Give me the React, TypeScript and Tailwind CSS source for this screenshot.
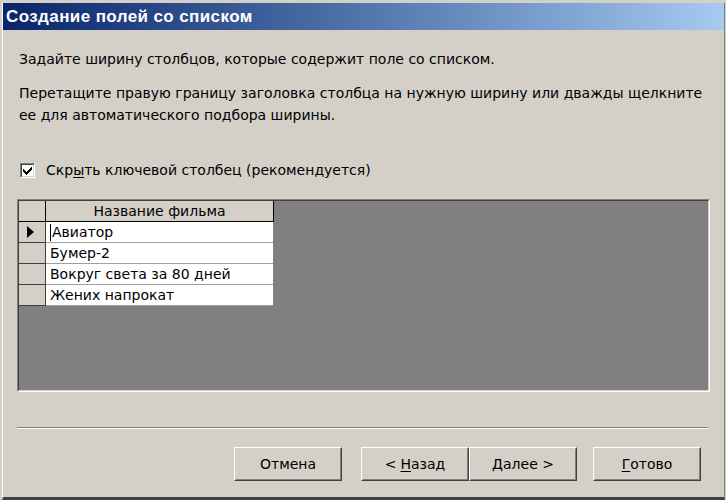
import React from "react"

const films = ["Авиатор", "Бумер-2", "Вокруг света за 80 дней", "Жених напрокат"]

function WinButton({ children, className = "" }: { children: React.ReactNode; className?: string }) {
  return (
    <div
      className={`w-[108px] h-[34px] border border-t-white border-l-white border-r-[#404040] border-b-[#404040] ${className}`}
    >
      <div className="w-full h-full border border-transparent border-r-[#808080] border-b-[#808080] flex items-center justify-center text-[14px] text-black">
        {children}
      </div>
    </div>
  )
}

export default function App() {
  return (
    <div
      className="w-[726px] h-[500px] bg-[#d4d0c8] overflow-hidden"
      style={{ fontFamily: '"DejaVu Sans", Verdana, sans-serif' }}
    >
      <div className="ml-[2px] mr-[1px] mt-[3px] h-[497px] border-l border-l-white border-r border-r-[#808080] border-b-[3px] border-b-[#404040] flex flex-col">
        {/* title bar */}
        <div className="h-[27px] bg-gradient-to-r from-[#0a246a] to-[#a6caf0] flex items-center pl-[3px]">
          <span
            className="text-white font-bold text-[17px] tracking-[0.4px]"
            style={{ fontFamily: '"Liberation Sans", Arial, sans-serif' }}
          >
            Создание полей со списком
          </span>
        </div>

        {/* body */}
        <div className="flex flex-col text-[14px] text-black">
          <p className="mt-[18px] ml-[16px] leading-[22px]">
            Задайте ширину столбцов, которые содержит поле со списком.
          </p>
          <p className="mt-[12px] ml-[16px] leading-[22px] whitespace-nowrap">
            Перетащите правую границу заголовка столбца на нужную ширину или дважды щелкните
            <br />
            ее для автоматического подбора ширины.
          </p>

          <div className="mt-[33px] ml-[17px] h-[22px] flex items-center">
            <div className="w-[15px] h-[15px] border border-t-[#808080] border-l-[#808080] border-r-white border-b-white">
              <div className="w-full h-full border border-t-[#404040] border-l-[#404040] border-r-[#d4d0c8] border-b-[#d4d0c8] bg-white flex items-center justify-center">
                <svg width="9" height="9" viewBox="0 0 9 9" shapeRendering="crispEdges">
                  <path d="M0 3 L0 6 L3 9 L9 3 L9 0 L3 6 Z" fill="#000" />
                </svg>
              </div>
            </div>
            <span className="ml-[11px]">
              Скр<span className="underline underline-offset-2">ы</span>ть ключевой столбец (рекомендуется)
            </span>
          </div>

          {/* datasheet */}
          <div className="mt-[18px] ml-[14px] w-[693px] h-[193px] border border-t-[#808080] border-l-[#808080] border-r-white border-b-white">
            <div className="w-full h-full border border-t-[#404040] border-l-[#404040] border-r-[#d4d0c8] border-b-[#d4d0c8] bg-[#808080]">
              <div className="flex h-[21px]">
                <div className="w-[27px] bg-[#d4d0c8] border-r border-b border-[#000]" />
                <div className="w-[228px] bg-[#d4d0c8] border-r border-b border-[#000] flex items-center justify-center leading-none">
                  Название фильма
                </div>
              </div>
              {films.map((film, i) => (
                <div key={film} className="flex h-[21px]">
                  <div className="w-[27px] bg-[#d4d0c8] border-r border-b border-[#404040] flex items-center pl-[8px]">
                    {i === 0 && (
                      <div className="w-0 h-0 border-y-[6px] border-y-transparent border-l-[7px] border-l-black" />
                    )}
                  </div>
                  <div className="w-[227px] bg-white border-b border-[#a0a0a0] flex items-center pl-[4px] leading-none">
                    {i === 0 && <span className="w-[1px] h-[17px] bg-black mr-[1px]" />}
                    {film}
                  </div>
                </div>
              ))}
            </div>
          </div>

          {/* separator */}
          <div className="mt-[35px] ml-[14px] w-[691px] border-t border-t-[#808080] border-b border-b-white" />

          {/* buttons */}
          <div className="mt-[18px] flex">
            <WinButton className="ml-[231px]">Отмена</WinButton>
            <WinButton className="ml-[19px]">
              &lt; <span className="underline underline-offset-2 ml-[4px]">Н</span>азад
            </WinButton>
            <WinButton>
              <span className="underline underline-offset-2">Д</span>алее &gt;
            </WinButton>
            <WinButton className="ml-[16px]">
              <span className="underline underline-offset-2">Г</span>отово
            </WinButton>
          </div>
        </div>
      </div>
    </div>
  )
}
